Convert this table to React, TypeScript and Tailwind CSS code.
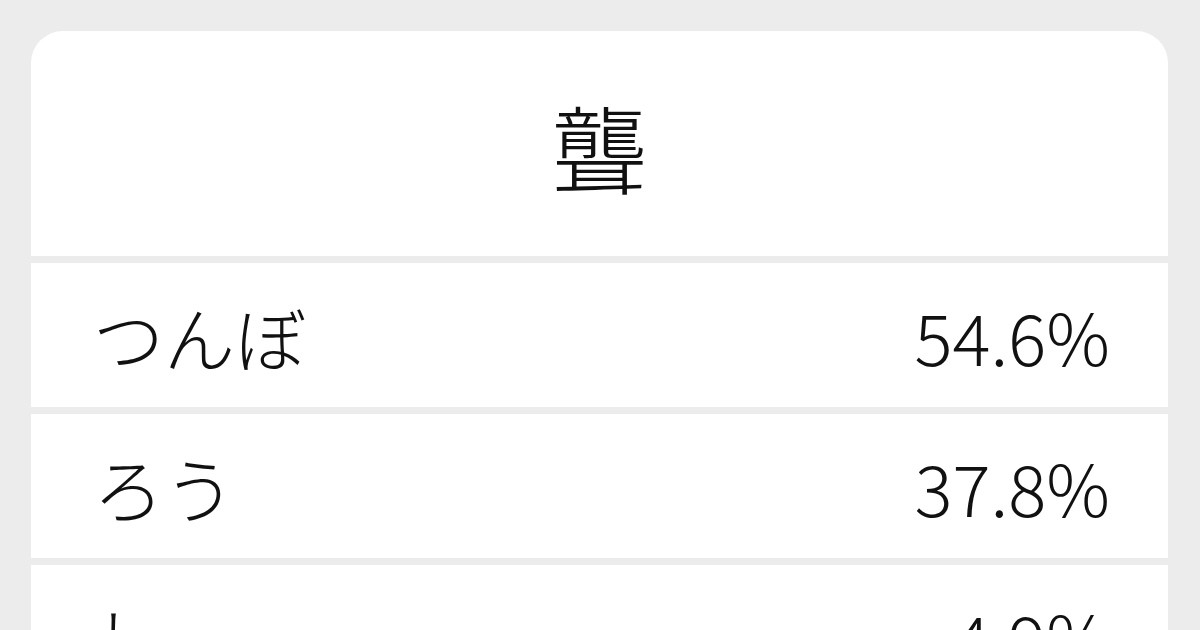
const rows = [
  { reading: "つんぼ", pct: "54.6%" },
  { reading: "ろう", pct: "37.8%" },
  { reading: "し", pct: "4.9%" },
]

export default function App() {
  return (
    <div
      className="h-[630px] w-[1200px] overflow-hidden bg-[#ececec] pl-[31px] pr-[32px] pt-[31px] text-[#111111]"
      style={{ fontFamily: '"Noto Sans CJK JP", "Noto Sans", sans-serif' }}
    >
      <div className="flex flex-col gap-[7px] overflow-hidden rounded-t-[32px]">
        <div className="flex h-[225px] items-center justify-center bg-white pt-[4px]">
          <span className="text-[96px] font-light leading-none">聾</span>
        </div>
        {rows.map((r) => (
          <div
            key={r.reading}
            className="flex h-[144px] shrink-0 items-center justify-between bg-white pl-[62px] pr-[58px]"
          >
            <span className="text-[71px] font-light leading-none">{r.reading}</span>
            <span className="text-[71px] font-light leading-none">{r.pct}</span>
          </div>
        ))}
      </div>
    </div>
  )
}
